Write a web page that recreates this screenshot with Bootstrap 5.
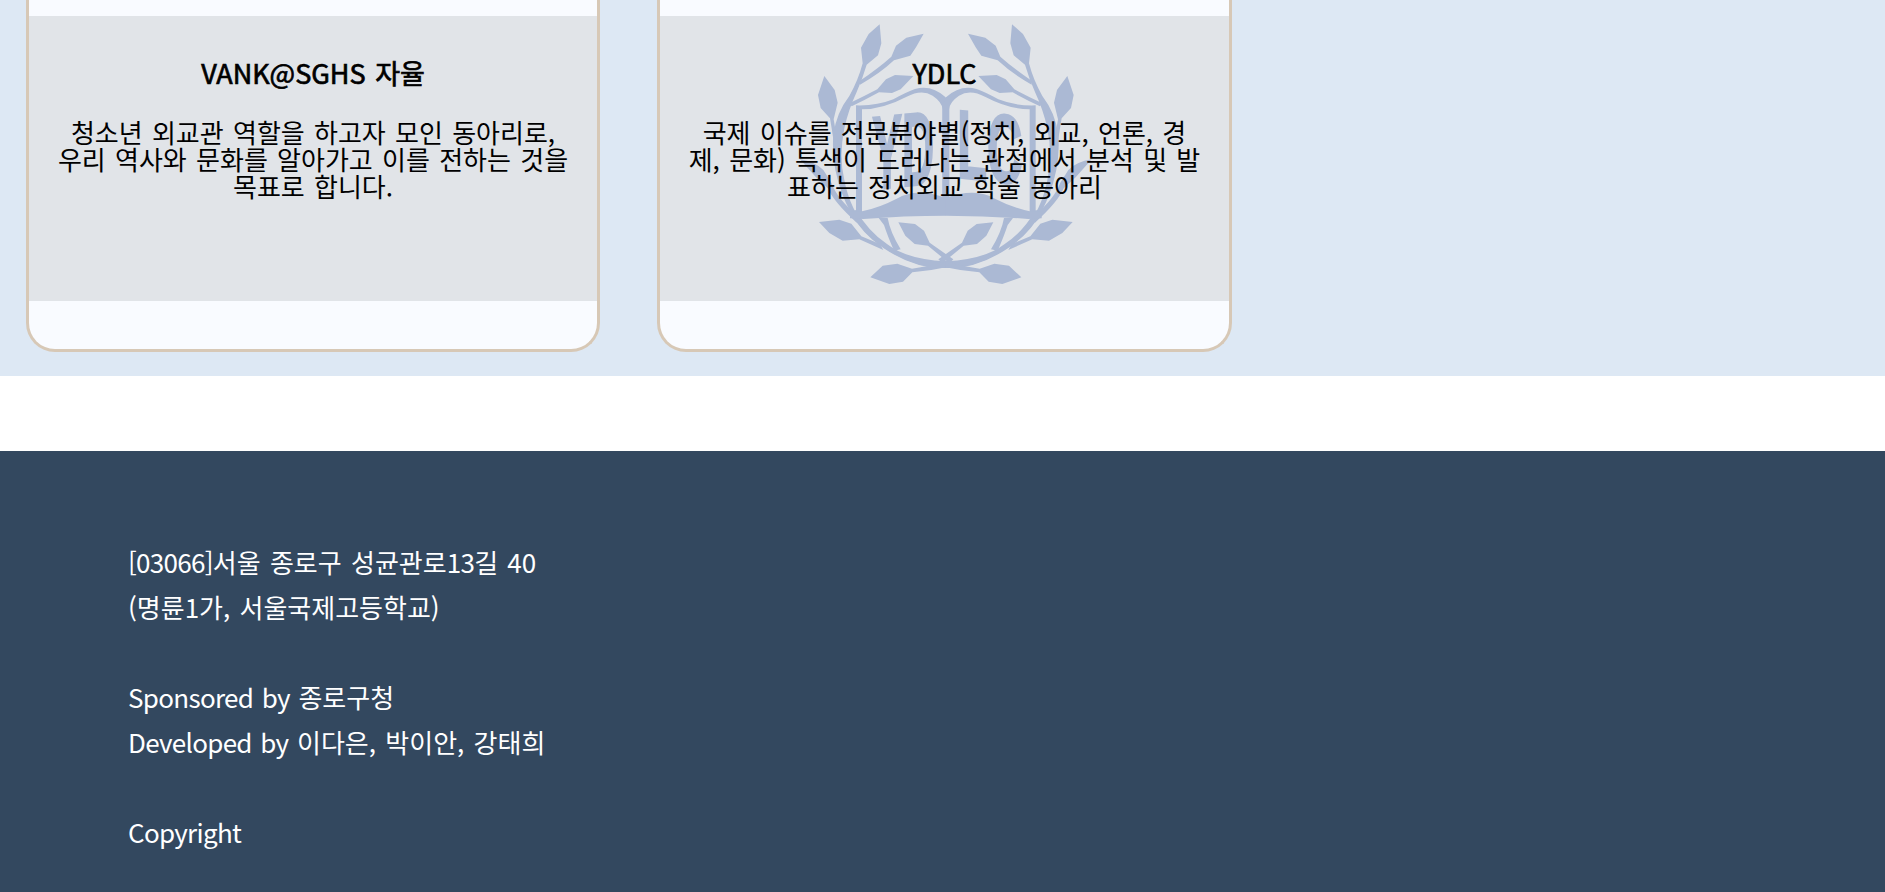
<!DOCTYPE html>
<html lang="ko">
<head>
<meta charset="utf-8">
<meta name="viewport" content="width=device-width, initial-scale=1">
<title>동아리 소개</title>
<link href="https://cdn.jsdelivr.net/npm/bootstrap@5.3.0/dist/css/bootstrap.min.css" rel="stylesheet">
<style>
  body { font-family: "Noto Sans CJK KR", sans-serif; font-size: 26px; color: #000; overflow: hidden; height: 892px; word-spacing: 2px; }
  .club-section { background: #dde8f4; height: 376px; padding-left: 26px; gap: 57px; }
  .club-card { width: 574px; height: 352px; background: #f9fbff; border: 3px solid #d7c8b6; border-top: 0; border-radius: 0 0 29px 29px; }
  .club-card.wide { width: 575px; }
  .club-body { margin-top: 16px; height: 285px; background: #e1e4e8; }
  .club-name { font-size: 27px; line-height: 34px; padding-top: 40px; margin-bottom: 28px; font-weight: 400; -webkit-text-stroke: .7px #000; }
  .club-text { line-height: 27px; white-space: nowrap; }
  .emblem { left: 140px; top: -6px; width: 300px; height: 290px; color: #abb9d4; }
  .site-footer { background: #33485f; margin-top: 75px; height: 441px; padding: 88px 0 0 128px; color: #fff; line-height: 45px; }
  .latin { letter-spacing: -.7px; }
</style>
</head>
<body>
<main class="club-section d-flex align-items-start">
  <article class="club-card">
    <div class="club-body text-center">
      <h2 class="club-name">VANK@SGHS 자율</h2>
      <p class="club-text m-0">청소년 외교관 역할을 하고자 모인 동아리로,<br>우리 역사와 문화를 알아가고 이를 전하는 것을<br>목표로 합니다.</p>
    </div>
  </article>
  <article class="club-card wide">
    <div class="club-body text-center position-relative">
      <svg class="emblem position-absolute" viewBox="0 0 900 870" fill="currentColor" stroke="none" aria-hidden="true">
        <defs>
          <g id="branch">
            <path d="M239 43L244 100 234 136 200 164Q187 208 170 246Q145 300 133 355Q116 440 133 510Q150 600 205 660Q275 740 390 752Q420 755 438 752V774Q345 776 250 712Q165 655 128 555Q93 465 100 375Q108 310 148 258Q175 210 188 160L183 113 206 72Z"/>
            <path d="M168 600Q205 665 262 703Q320 748 438 754V774Q345 778 250 714Q185 670 150 605Z"/>
            <path d="M371 71L348 112 331 137 282 151Q238 192 180 224V212Q236 174 274 140L288 107 319 83Z"/>
            <path d="M340 198L302 238 276 249 237 247Q195 270 155 289L148 280Q190 260 232 238L258 208 285 195Z"/>
            <path d="M73 198L104 240 113 278 101 328Q110 390 125 450L107 440Q101 390 90 325L62 294 54 255Z"/>
            <path d="M0 448Q45 455 70 480L95 520Q110 565 175 620L170 638Q100 575 84 535L48 502Z"/>
            <path d="M57 636L118 629 154 641 184 679 240 702 250 720 178 688 128 692 88 669Z"/>
            <path d="M211 802L248 767 292 761 336 776Q390 768 428 756L438 772Q390 783 337 787L309 815 268 822Z"/>
            <path d="M295 637L345 642 372 662 389 698 460 748 448 760 384 707 344 702 316 677Z"/>
            <path d="M168 286V615H186V298Q250 297 320 260Q365 236 398 257Q426 276 428 298V566H448V288L437 262Q395 223 345 237Q315 248 280 268Q230 288 168 286Z"/>
            <path d="M150 604H186Q240 592 290 566Q350 532 438 564V617Q310 617 190 627L150 625Z"/>
            <path d="M236 624H263Q270 665 302 718L282 722Q262 676 252 645Z"/>
          </g>
        </defs>
        <use href="#branch"/>
        <use href="#branch" transform="translate(875 0) scale(-1 1)"/>
        <g font-family="Liberation Sans Narrow, Liberation Sans, sans-serif" font-weight="700" stroke="currentColor" stroke-width="8">
          <text transform="translate(217 538) skewY(-6)" font-size="310" textLength="186" lengthAdjust="spacingAndGlyphs">YD</text>
          <text transform="translate(472 502) skewY(6)" font-size="290" textLength="195" lengthAdjust="spacingAndGlyphs">LC</text>
        </g>
      </svg>
      <div class="position-relative">
        <h2 class="club-name">YDLC</h2>
        <p class="club-text m-0">국제 이슈를 전문분야별(정치, 외교, 언론, 경<br>제, 문화) 특색이 드러나는 관점에서 분석 및 발<br>표하는 정치외교 학술 동아리</p>
      </div>
    </div>
  </article>
</main>
<footer class="site-footer">
  <div><span class="latin">[03066]</span>서울 종로구 성균관로<span class="latin">13</span>길 40</div>
  <div>(명륜1가, 서울국제고등학교)</div>
  <br>
  <div><span class="latin">Sponsored by </span>종로구청</div>
  <div><span class="latin">Developed by </span>이다은, 박이안, 강태희</div>
  <br>
  <div class="latin">Copyright</div>
</footer>
<script src="https://cdn.jsdelivr.net/npm/bootstrap@5.3.0/dist/js/bootstrap.bundle.min.js"></script>
</body>
</html>
